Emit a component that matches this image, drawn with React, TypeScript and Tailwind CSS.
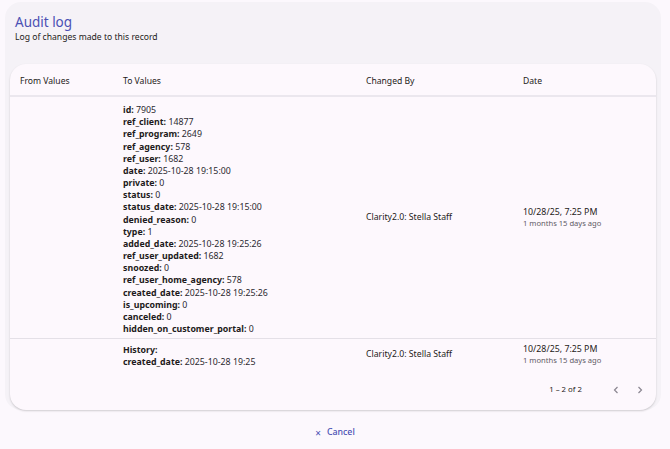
import React from "react";

const fields: [string, string][] = [
  ["id", "7905"],
  ["ref_client", "14877"],
  ["ref_program", "2649"],
  ["ref_agency", "578"],
  ["ref_user", "1682"],
  ["date", "2025-10-28 19:15:00"],
  ["private", "0"],
  ["status", "0"],
  ["status_date", "2025-10-28 19:15:00"],
  ["denied_reason", "0"],
  ["type", "1"],
  ["added_date", "2025-10-28 19:25:26"],
  ["ref_user_updated", "1682"],
  ["snoozed", "0"],
  ["ref_user_home_agency", "578"],
  ["created_date", "2025-10-28 19:25:26"],
  ["is_upcoming", "0"],
  ["canceled", "0"],
  ["hidden_on_customer_portal", "0"],
];

const cols = "grid grid-cols-[103px_243px_157px_143px]";

function DateCell() {
  return (
    <div className="pl-[10px] flex flex-col justify-center">
      <div className="text-[8.8px] leading-[11px] text-[#1d1b20]">10/28/25, 7:25 PM</div>
      <div className="text-[7.6px] leading-[10px] text-[#5f5b66]">1 months 15 days ago</div>
    </div>
  );
}

export default function App() {
  return (
    <div
      className="w-[670px] h-[449px] bg-[#fcf8fd] overflow-hidden pt-[2px] pl-[5px]"
      style={{ fontFamily: '"Noto Sans", "Open Sans", sans-serif' }}
    >
      <div className="w-[656px] h-[408px] bg-[#f5f2f7] rounded-[16px] px-[5px] flex flex-col">
        <div className="pl-[5px] pt-[10px] h-[62px]">
          <div className="text-[13.5px] leading-[20px] text-[#4b50b4]">Audit log</div>
          <div className="text-[8.6px] leading-[11px] text-[#1d1b20]">Log of changes made to this record</div>
        </div>
        <div className="flex-1 bg-[#fdf8fd] rounded-[16px] shadow-[0_1px_2px_rgba(0,0,0,0.18)] overflow-hidden flex flex-col text-[#1d1b20]">
          <div className={`${cols} h-[33px] pt-[3px] items-center border-b-2 border-[#ebe7ee] text-[8.6px]`}>
            <div className="pl-[10px]">From Values</div>
            <div className="pl-[10px]">To Values</div>
            <div className="pl-[10px]">Changed By</div>
            <div className="pl-[10px]">Date</div>
          </div>
          <div className={`${cols} border-b border-[#e4e0e7]`}>
            <div />
            <div className="pl-[10px] pt-[7px] pb-[3px] text-[8.8px] leading-[12.17px]">
              {fields.map(([k, v]) => (
                <div key={k}>
                  <span className="font-bold">{k}:</span> <span className="text-[#2b2930]">{v}</span>
                </div>
              ))}
            </div>
            <div className="pl-[10px] flex items-center text-[8.7px]">Clarity2.0: Stella Staff</div>
            <DateCell />
          </div>
          <div className={`${cols}`}>
            <div />
            <div className="pl-[10px] pt-[5px] pb-[2px] text-[8.8px] leading-[12.17px]">
              <div className="font-bold">History:</div>
              <div>
                <span className="font-bold">created_date:</span> <span className="text-[#2b2930]">2025-10-28 19:25</span>
              </div>
            </div>
            <div className="pl-[10px] flex items-center text-[8.7px]">Clarity2.0: Stella Staff</div>
            <DateCell />
          </div>
          <div className="flex items-center justify-end h-[34px] pt-[4px] pr-[10px] text-[7.8px] text-[#1d1b20]">
            <span className="mr-[28px]">1 – 2 of 2</span>
            <svg width="12" height="12" viewBox="0 0 12 12" className="mr-[12px]">
              <path d="M7.5 3 L4.5 6 L7.5 9" fill="none" stroke="#8a8690" strokeWidth="1.2" />
            </svg>
            <svg width="12" height="12" viewBox="0 0 12 12">
              <path d="M4.5 3 L7.5 6 L4.5 9" fill="none" stroke="#8a8690" strokeWidth="1.2" />
            </svg>
          </div>
        </div>
      </div>
      <div className="flex justify-center items-center mt-[16px] text-[#4b50b4] text-[8.8px] pr-[5px]">
        <span className="mr-[6px] text-[10px] leading-none">×</span>
        <span className="font-medium">Cancel</span>
      </div>
    </div>
  );
}
